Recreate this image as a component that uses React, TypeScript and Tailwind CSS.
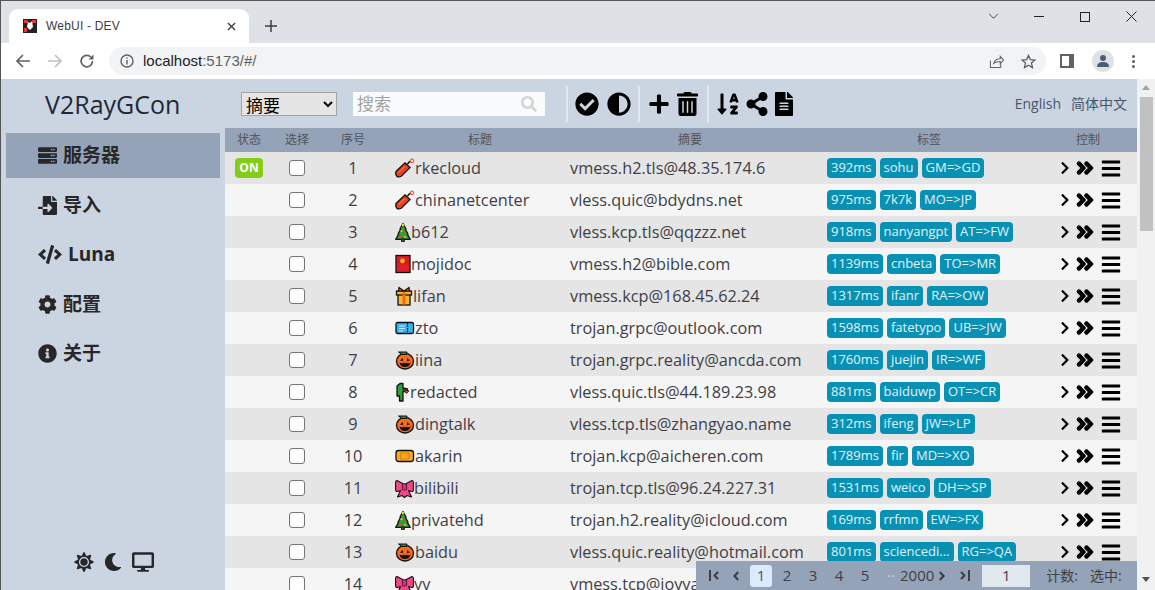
import type { ReactNode } from "react";
import {
  FaAdjust,
  FaAngleDoubleRight,
  FaAngleRight,
  FaBars,
  FaCheckCircle,
  FaChevronRight,
  FaCode,
  FaCog,
  FaDesktop,
  FaFileAlt,
  FaFileImport,
  FaInfoCircle,
  FaMoon,
  FaPlus,
  FaSun,
  FaSearch,
  FaServer,
  FaShareAlt,
  FaSortAlphaDown,
  FaTrashAlt,
  FaAngleLeft,
} from "react-icons/fa";

const FONT = "font-['Open_Sans','Noto_Sans_CJK_SC',sans-serif]";

type EmojiName = "cracker" | "tree" | "envelope" | "gift" | "ticket" | "pumpkin" | "cactus" | "candy" | "ribbon";

const Emoji = ({ name }: { name: EmojiName }) => {
  const common = "h-[20px] shrink-0";
  if (name === "cracker")
    return (
      <svg viewBox="0 0 20 20" className={`${common} w-[20px]`}>
        <path d="M1.200 13.200 L10 5 L15 9.500 L6.500 18 Q3.500 19.800 1.800 18.200 Q0 16 1.200 13.200Z" fill="#ee3f1a" stroke="#111" strokeWidth="1.300" />
        <path d="M3.500 14.500 L10 8.500" stroke="#ff8a66" strokeWidth=".9" />
        <path d="M12.500 6 Q14 3.500 16 3" fill="none" stroke="#111" strokeWidth="1.500" />
        <circle cx="17" cy="2.800" r="1.800" fill="#fde3d8" stroke="#ee3f1a" strokeWidth="1" />
      </svg>
    );
  if (name === "tree")
    return (
      <svg viewBox="0 0 16 20" className={`${common} w-[16px]`}>
        <path d="M8 1.500 L11 7 L10.500 7.500 L13 12 L12.500 12.500 L15.300 17.300 H.7 L3.500 12.500 L3 12 L5.500 7.500 L5 7Z" fill="#2f9e3a" stroke="#111" strokeWidth="1.300" strokeLinejoin="round" />
        <rect x="6.500" y="17" width="3" height="2.400" fill="#6b3d1e" stroke="#111" strokeWidth=".8" />
        <circle cx="8" cy="3" r="1.300" fill="#f9c31f" />
        <circle cx="6.500" cy="9" r="1.100" fill="#f9c31f" />
        <circle cx="10" cy="11" r="1.100" fill="#e8401c" />
        <circle cx="5.500" cy="14" r="1.100" fill="#e8401c" />
        <circle cx="10" cy="15" r="1.100" fill="#f9c31f" />
      </svg>
    );
  if (name === "envelope")
    return (
      <svg viewBox="0 0 16 20" className={`${common} w-[16px]`}>
        <rect x="1" y="1.500" width="14" height="17" fill="#e01b2a" stroke="#111" strokeWidth="1.300" />
        <path d="M1.500 7.500 L8 9.500 L14.500 7.500" fill="none" stroke="#b01020" strokeWidth=".8" />
        <circle cx="7.500" cy="7" r="2.400" fill="#fdb813" />
      </svg>
    );
  if (name === "gift")
    return (
      <svg viewBox="0 0 18 20" className={`${common} w-[18px]`}>
        <rect x="3" y="8" width="12" height="11" fill="#f9b52b" stroke="#111" strokeWidth="1.300" />
        <rect x="1.500" y="5" width="15" height="4" fill="#f9b52b" stroke="#111" strokeWidth="1.300" />
        <rect x="7.500" y="5.500" width="3" height="13" fill="#ee6a1c" />
        <path d="M9 5 L4 1.500 L3.500 5Z M9 5 L14 1.500 L14.500 5Z" fill="#ee6a1c" stroke="#111" strokeWidth="1.200" />
      </svg>
    );
  if (name === "ticket")
    return (
      <svg viewBox="0 0 20 20" className={`${common} w-[20px]`}>
        <rect x="1" y="4.500" width="17.500" height="11" rx="1.500" fill="#35b4ec" stroke="#111" strokeWidth="1.300" />
        <path d="M12.500 5 V15" stroke="#111" strokeWidth="1.200" strokeDasharray="1.500 1" />
        <path d="M4 8 H10 M4 10.500 H10 M4 13 H8" stroke="#bfeaff" strokeWidth="1" />
      </svg>
    );
  if (name === "pumpkin")
    return (
      <svg viewBox="0 0 20 20" className={`${common} w-[20px]`}>
        <ellipse cx="10" cy="11.200" rx="8.500" ry="7.800" fill="#f26a1b" stroke="#111" strokeWidth="1.300" />
        <path d="M3.500 2 H12 L11.500 4.500 L7 4.500Z" fill="#2f8a38" stroke="#111" strokeWidth="1" />
        <path d="M5 10.500 L8 8 V11Z M15 10.500 L12 8 V11Z" fill="#111" />
        <path d="M4.500 12.500 L7 13.500 L8.500 12.500 L10 13.500 L11.500 12.500 L13 13.500 L15.500 12.500 Q14.500 17 10 17 Q5.500 17 4.500 12.500Z" fill="#111" />
      </svg>
    );
  if (name === "cactus")
    return (
      <svg viewBox="0 0 15 20" className={`${common} w-[15px]`}>
        <path d="M4.500 19 V14 H2 V4 L5 1.500 H8 V6 L12.500 7 V9.500 L8 9.500 V19Z" fill="#2f9e3a" stroke="#111" strokeWidth="1.300" strokeLinejoin="round" />
        <path d="M8 7.500 L14 9 L11.500 11.500Z" fill="#e8401c" stroke="#111" strokeWidth=".8" />
      </svg>
    );
  if (name === "candy")
    return (
      <svg viewBox="0 0 20 20" className={`${common} w-[20px]`}>
        <rect x="1" y="4.500" width="17.500" height="11" rx="2.500" fill="#f7a823" stroke="#111" strokeWidth="1.300" />
        <rect x="5.500" y="7" width="8.500" height="6" rx="1" fill="none" stroke="#d9820f" strokeWidth="1.200" />
      </svg>
    );
  return (
    <svg viewBox="0 0 19 20" className={`${common} w-[19px]`}>
      <path d="M9.500 6.500 L2 2.500 Q.6 2.500 .6 4.500 V12 Q.8 13.800 2.500 13.500 L5.500 12.500 L2.500 19 L7 17.500 L9.500 19.500 L12 17.500 L16.500 19 L13.500 12.500 L16.500 13.500 Q18.200 13.800 18.400 12 V4.500 Q18.400 2.500 17 2.500Z" fill="#f4478a" stroke="#111" strokeWidth="1.100" strokeLinejoin="round" />
      <rect x="7.300" y="6" width="4.400" height="6" rx="1" fill="#e02c74" stroke="#111" strokeWidth=".7" />
    </svg>
  );
};

const rows: { title: string; emoji: EmojiName; summary: string; tags: string[] }[] = [
  { title: "rkecloud", emoji: "cracker", summary: "vmess.h2.tls@48.35.174.6", tags: ["392ms", "sohu", "GM=>GD"] },
  { title: "chinanetcenter", emoji: "cracker", summary: "vless.quic@bdydns.net", tags: ["975ms", "7k7k", "MO=>JP"] },
  { title: "b612", emoji: "tree", summary: "vless.kcp.tls@qqzzz.net", tags: ["918ms", "nanyangpt", "AT=>FW"] },
  { title: "mojidoc", emoji: "envelope", summary: "vmess.h2@bible.com", tags: ["1139ms", "cnbeta", "TO=>MR"] },
  { title: "lifan", emoji: "gift", summary: "vmess.kcp@168.45.62.24", tags: ["1317ms", "ifanr", "RA=>OW"] },
  { title: "zto", emoji: "ticket", summary: "trojan.grpc@outlook.com", tags: ["1598ms", "fatetypo", "UB=>JW"] },
  { title: "iina", emoji: "pumpkin", summary: "trojan.grpc.reality@ancda.com", tags: ["1760ms", "juejin", "IR=>WF"] },
  { title: "redacted", emoji: "cactus", summary: "vless.quic.tls@44.189.23.98", tags: ["881ms", "baiduwp", "OT=>CR"] },
  { title: "dingtalk", emoji: "pumpkin", summary: "vless.tcp.tls@zhangyao.name", tags: ["312ms", "ifeng", "JW=>LP"] },
  { title: "akarin", emoji: "candy", summary: "trojan.kcp@aicheren.com", tags: ["1789ms", "fir", "MD=>XO"] },
  { title: "bilibili", emoji: "ribbon", summary: "trojan.tcp.tls@96.24.227.31", tags: ["1531ms", "weico", "DH=>SP"] },
  { title: "privatehd", emoji: "tree", summary: "trojan.h2.reality@icloud.com", tags: ["169ms", "rrfmn", "EW=>FX"] },
  { title: "baidu", emoji: "pumpkin", summary: "vless.quic.reality@hotmail.com", tags: ["801ms", "sciencedi...", "RG=>QA"] },
  // last row runs under the pager, tags and controls are not visible
  { title: "yy", emoji: "ribbon", summary: "vmess.tcp@joyya", tags: [] },
];

const COLS = "grid grid-cols-[48px_48px_69px_180px_240px_238px_80px]";

const NavItem = ({ icon, label, active }: { icon: ReactNode; label: string; active?: boolean }) => (
  <div className={`mx-[5px] flex h-[45px] items-center gap-[6px] pl-[32px] text-[19px] font-bold text-[#27272a] ${active ? "bg-[#94a3b8]" : ""}`}>
    {icon}
    <span>{label}</span>
  </div>
);

const ToolDivider = () => <div className="h-[36px] w-[2px] bg-[#e2e8f0]" />;

const BrowserChrome = () => (
  <div className="shrink-0 font-['Liberation_Sans',sans-serif]">
    <div className="flex h-[42px] items-end bg-[#dee1e6] pl-[8px]">
      <div className="flex h-[34px] w-[240px] items-center rounded-t-[9px] bg-white pl-[14px] text-[12px] text-[#3c4043]">
        <svg viewBox="0 0 14 14" className="h-[14px] w-[14px]">
          <rect width="14" height="14" fill="#222" />
          <path d="M1 1h4v3H1zM9 1h4v3H9zM1 9h3v4H1z" fill="#e33" />
          <path d="M5 3l2 1 2-2 1 6-3 3-3-3z" fill="#fff" />
        </svg>
        <span className="ml-[9px] tracking-[0.2px]">WebUI - DEV</span>
        <svg viewBox="0 0 10 10" className="ml-[107px] h-[9px] w-[9px]">
          <path d="M1 1l8 8M9 1l-8 8" stroke="#3c4043" strokeWidth="1.500" />
        </svg>
      </div>
      <svg viewBox="0 0 12 12" className="mb-[11px] ml-[16px] h-[12px] w-[12px]">
        <path d="M6 0v12M0 6h12" stroke="#3c4043" strokeWidth="1.500" />
      </svg>
      <div className="mb-[21px] ml-auto flex items-center">
        <svg viewBox="0 0 12 8" className="mr-[35px] h-[7px] w-[11px]">
          <path d="M1 1l5 5 5-5" fill="none" stroke="#333" strokeWidth="1" />
        </svg>
        <div className="mr-[36px] h-px w-[10px] bg-[#222]" />
        <div className="mr-[36px] h-[10px] w-[10px] border border-[#222]" />
        <svg viewBox="0 0 11 11" className="mr-[18px] h-[11px] w-[11px]">
          <path d="M.5.5l10 10M10.500.5l-10 10" stroke="#222" strokeWidth="1" />
        </svg>
      </div>
    </div>
    <div className="flex h-[36px] items-center bg-white pl-[14px] pr-[14px]">
      <svg viewBox="0 0 16 16" className="h-[16px] w-[16px]">
        <path d="M15 8H2M8 2L2 8l6 6" fill="none" stroke="#5f6368" strokeWidth="1.700" />
      </svg>
      <svg viewBox="0 0 16 16" className="ml-[16px] h-[16px] w-[16px]">
        <path d="M1 8h13M8 2l6 6-6 6" fill="none" stroke="#bdc1c6" strokeWidth="1.700" />
      </svg>
      <svg viewBox="0 0 16 16" className="ml-[16px] h-[16px] w-[16px]">
        <path d="M13.500 8A5.700 5.700 0 1 1 11.800 4" fill="none" stroke="#5f6368" strokeWidth="1.700" />
        <path d="M14.500 1.500v5h-5z" fill="#5f6368" />
      </svg>
      <div className="ml-[14px] flex h-[28px] w-[937px] items-center rounded-full bg-[#f1f3f4] pl-[11px] pr-[10px] text-[15px]">
        <svg viewBox="0 0 14 14" className="h-[14px] w-[14px]">
          <circle cx="7" cy="7" r="6" fill="none" stroke="#5f6368" strokeWidth="1.400" />
          <path d="M7 6v4.500M7 3.500v1.300" stroke="#5f6368" strokeWidth="1.400" />
        </svg>
        <span className="ml-[9px] text-[#202124]">localhost</span>
        <span className="text-[#5f6368]">:5173/#/</span>
        <svg viewBox="0 0 16 16" className="ml-auto h-[15px] w-[15px]">
          <path d="M1.500 7v7.500h11V11M5 10c1-3.500 4-5 7-5V2.500L15.500 6.500 12 10.500V8c-3 0-5 .5-7 2z" fill="none" stroke="#5f6368" strokeWidth="1.100" />
        </svg>
        <svg viewBox="0 0 16 16" className="ml-[17px] h-[15px] w-[15px]">
          <path d="M8 1.500l2 4.500 4.800.5-3.600 3.200 1 4.800L8 12l-4.200 2.500 1-4.800L1.200 6.500 6 6z" fill="none" stroke="#5f6368" strokeWidth="1.400" />
        </svg>
      </div>
      <div className="ml-[14px] flex h-[14px] w-[14px] justify-end border-[2px] border-[#5f6368] border-r-[5px] bg-white" />
      <div className="ml-[18px] flex h-[22px] w-[22px] items-center justify-center rounded-full bg-[#dee1e6]">
        <svg viewBox="0 0 14 14" className="h-[14px] w-[14px]">
          <circle cx="7" cy="4" r="3" fill="#4f5b76" />
          <path d="M1 13c0-4 3-5 6-5s6 1 6 5z" fill="#4f5b76" />
        </svg>
      </div>
      <div className="ml-[18px] flex flex-col gap-[2px]">
        <div className="h-[3px] w-[3px] rounded-full bg-[#5f6368]" />
        <div className="h-[3px] w-[3px] rounded-full bg-[#5f6368]" />
        <div className="h-[3px] w-[3px] rounded-full bg-[#5f6368]" />
      </div>
    </div>
  </div>
);

const Sidebar = () => (
  <aside className="flex w-[224px] shrink-0 flex-col bg-[#cbd5e1]">
    <div className="flex h-[54px] items-center pb-[2px] pl-[44px] text-[25px] text-[#1e293b]">V2RayGCon</div>
    <nav className="flex flex-col gap-[4.500px]">
      <NavItem icon={<FaServer className="h-[19px] w-[19px]" />} label="服务器" active />
      <NavItem icon={<FaFileImport className="h-[19px] w-[19px]" />} label="导入" />
      <NavItem icon={<FaCode className="h-[19px] w-[24px]" />} label="Luna" />
      <NavItem icon={<FaCog className="h-[19px] w-[19px]" />} label="配置" />
      <NavItem icon={<FaInfoCircle className="h-[19px] w-[19px]" />} label="关于" />
    </nav>
    <div className="mt-auto mb-[18px] flex items-center gap-[10px] pl-[73px] text-[#27272a]">
      <FaSun className="h-[20px] w-[20px]" />
      <FaMoon className="h-[20px] w-[18px]" />
      <FaDesktop className="h-[20px] w-[22px]" />
    </div>
  </aside>
);

const Toolbar = () => (
  <div className="flex h-[49px] shrink-0 items-center bg-[#cbd5e1] pl-[16px] pr-[10px]">
    <select className="h-[24px] w-[96px] border border-[#a3a3a3] bg-[#e5e5e5] text-[17px] text-black">
      <option>摘要</option>
    </select>
    <div className="relative ml-[16px] h-[24px] w-[192px] bg-white/90">
      <input placeholder="搜索" className="h-full w-full bg-transparent pl-[4px] text-[17px] outline-none placeholder:text-[#a3a3a3]" />
      <FaSearch className="absolute right-[8px] top-[4px] h-[16px] w-[16px] text-[#d4d4d4]" />
    </div>
    <div className="ml-[21px] flex items-center text-black">
      <ToolDivider />
      <FaCheckCircle className="ml-[7px] h-[24px] w-[24px]" />
      <FaAdjust className="ml-[8px] h-[24px] w-[24px]" />
      <div className="ml-[7px]"><ToolDivider /></div>
      <FaPlus className="ml-[8px] h-[22px] w-[22px]" />
      <FaTrashAlt className="ml-[7px] h-[24px] w-[21px]" />
      <div className="ml-[9px]"><ToolDivider /></div>
      <FaSortAlphaDown className="ml-[8px] h-[24px] w-[22px]" />
      <FaShareAlt className="ml-[7px] h-[24px] w-[22px]" />
      <FaFileAlt className="ml-[7px] h-[24px] w-[18px]" />
    </div>
    <div className="ml-auto flex gap-[10px] text-[14px] text-[#475569]">
      <span>English</span>
      <span>简体中文</span>
    </div>
  </div>
);

const ServerRow = ({ row, index }: { row: (typeof rows)[number]; index: number }) => (
  <div className={`${COLS} h-[32px] shrink-0 items-center text-[16.300px] text-[#3f3f46] ${index % 2 === 0 ? "bg-[#e5e5e5]" : "bg-[#f5f5f5]"}`}>
    <div className="flex justify-center">
      {index === 0 && (
        <span className="flex h-[20px] w-[28px] items-center justify-center rounded-[4px] bg-[#84cc16] text-[12px] font-bold text-white">ON</span>
      )}
    </div>
    <div className="flex justify-center">
      <div className="h-[16px] w-[16px] rounded-[3px] border border-[#767676] bg-white" />
    </div>
    <div className="pr-[5px] text-center">{index + 1}</div>
    <div className="flex items-center pl-[5px]">
      <Emoji name={row.emoji} />
      <span>{row.title}</span>
    </div>
    <div className="whitespace-nowrap">{row.summary}</div>
    <div className="flex gap-[4px] pl-[17px]">
      {row.tags.map((tag) => (
        <span key={tag} className="flex h-[20px] items-center rounded-[4px] bg-[#0891b2] px-[4px] text-[13px] font-medium whitespace-nowrap text-[#e0f2fe]">
          {tag}
        </span>
      ))}
    </div>
    {row.tags.length > 0 && (
      <div className="flex items-center pl-[10px] text-black">
        <FaChevronRight className="h-[14px] w-[14px]" />
        <FaAngleDoubleRight className="ml-[3px] h-[20px] w-[20px] stroke-[30px]" />
        <FaBars className="ml-[6px] h-[21px] w-[20px]" />
      </div>
    )}
  </div>
);

const Pager = () => (
  <div className="absolute bottom-0 right-0 flex h-[29px] w-[441px] items-center bg-[#94a3b8] pl-[13px] text-[15px] text-[#3f3f46]">
    <span className="flex h-[12px] w-[12px] items-center"><span className="h-[11px] w-[1.500px] bg-[#3f3f46]" /><FaAngleLeft className="h-[13px] w-[10px]" /></span>
    <FaAngleLeft className="ml-[10px] h-[14px] w-[10px]" />
    <span className="ml-[9px] flex h-[22px] w-[22px] items-center justify-center rounded-[3px] bg-[#dbeafe] text-[#52525b]">1</span>
    <span className="ml-[10px] w-[10px] text-center">2</span>
    <span className="ml-[16px] w-[10px] text-center">3</span>
    <span className="ml-[16px] w-[10px] text-center">4</span>
    <span className="ml-[16px] w-[10px] text-center">5</span>
    <span className="ml-[16px] w-[10px] text-center text-[#cbd5e1]">··</span>
    <span className="ml-[4px]">2000</span>
    <FaAngleRight className="ml-[3px] h-[14px] w-[10px]" />
    <span className="ml-[11px] flex h-[12px] w-[12px] items-center"><FaAngleRight className="h-[13px] w-[10px]" /><span className="h-[11px] w-[1.500px] bg-[#3f3f46]" /></span>
    <span className="ml-[12px] flex h-[22px] w-[48px] items-center justify-center bg-[#e2e8f0]">1</span>
    <span className="ml-[16px] text-[14px]">计数:</span>
    <span className="ml-[12px] text-[14px]">选中:</span>
  </div>
);

const Scrollbar = () => (
  <div className="flex w-[18px] shrink-0 flex-col items-center bg-[#f1f1f1]">
    <div className="mt-[6px] h-0 w-0 border-x-[4px] border-b-[5px] border-x-transparent border-b-[#a3a3a3]" />
    <div className="mt-[7px] h-[134px] w-[13px] bg-[#c1c1c1]" />
    <div className="mt-auto mb-[8px] h-0 w-0 border-x-[4px] border-t-[5px] border-x-transparent border-t-[#505050]" />
  </div>
);

export default function App() {
  return (
    <div className={`flex h-[590px] w-[1155px] flex-col overflow-hidden border-t border-l border-[#555] ${FONT}`}>
      <BrowserChrome />
      <div className="flex min-h-0 flex-1">
        <Sidebar />
        <main className="relative flex min-w-0 flex-1 flex-col overflow-hidden">
          <Toolbar />
          <div className={`${COLS} h-[24px] shrink-0 items-center bg-[#94a3b8] text-center text-[12px] text-[#52525b]`}>
            <div>状态</div>
            <div>选择</div>
            <div className="pr-[5px]">序号</div>
            <div>标题</div>
            <div>摘要</div>
            <div>标签</div>
            <div>控制</div>
          </div>
          {rows.map((row, index) => (
            <ServerRow key={row.title} row={row} index={index} />
          ))}
          <Pager />
        </main>
        <Scrollbar />
      </div>
    </div>
  );
}
